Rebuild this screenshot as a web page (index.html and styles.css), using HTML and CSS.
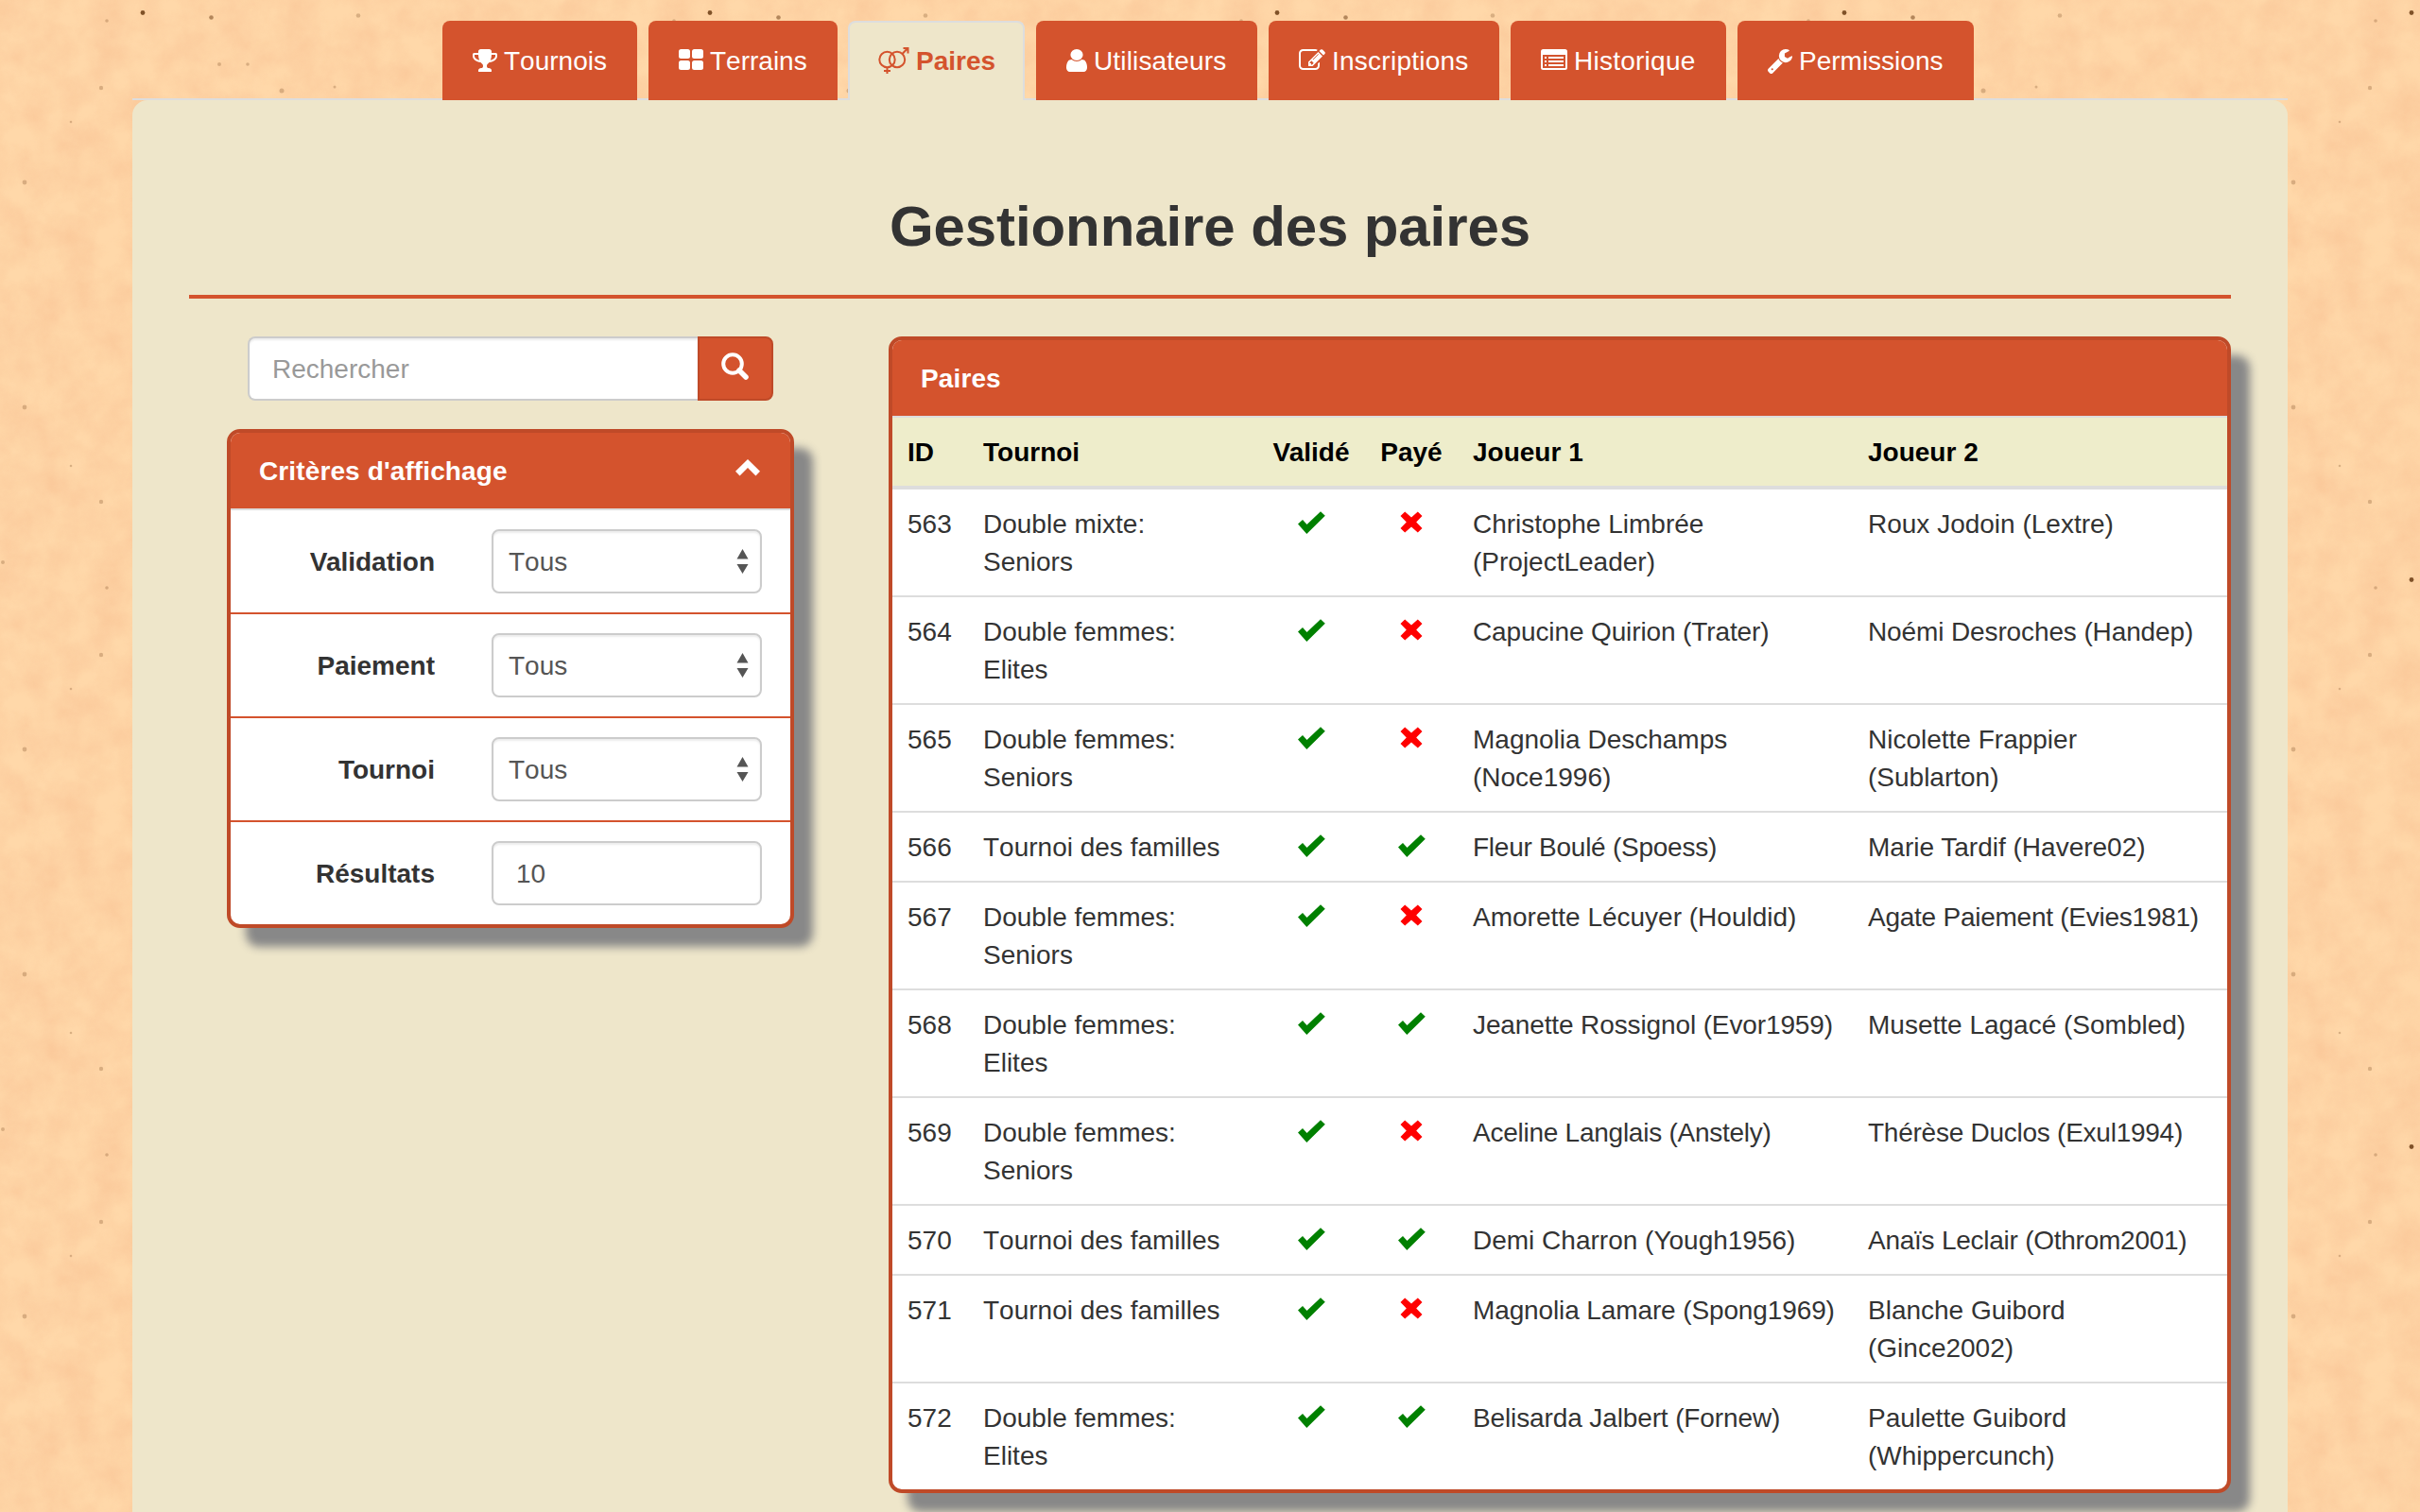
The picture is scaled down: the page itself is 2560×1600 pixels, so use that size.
FILE: index.html
```html
<!DOCTYPE html>
<html lang="fr">
<head>
<meta charset="utf-8">
<title>Gestionnaire des paires</title>
<link rel="stylesheet" href="styles.css">
</head>
<body>
<svg class="defs" width="0" height="0" aria-hidden="true">
  <symbol id="ok" viewBox="0 0 29 24"><path d="M0 13.500 5 9l4.500 5L24 .2 28.800 4.700 9.300 24z"/></symbol>
  <symbol id="no" viewBox="0 0 24 23"><path d="M5.200.4 12 6.600 18.800.4 23.500 5 17.200 11.500 23.500 18 18.800 22.600 12 16.400 5.200 22.600.5 18 6.800 11.500.5 5z" stroke-linejoin="round"/></symbol>
  <symbol id="sort" viewBox="0 0 13 26"><path d="M6.500 0 12.500 10.500H.5zM6.500 26 .5 16h12z"/></symbol>
</svg>

<nav class="tabs">
  <a class="tab t1" href="#"><svg class="ic" width="26" height="24" viewBox="64 128 1664 1536" preserveAspectRatio="none"><path d="M522 883q-74-162-74-371h-256v96q0 78 94.500 162t235.500 113zm1078-275v-96h-256q0 209-74 371 141-29 235.500-113t94.500-162zm128-128v128q0 71-41.500 143t-112 130-173 97.500-215.500 44.500q-42 54-95 95-38 34-52.500 72.500t-14.500 89.500q0 54 30.500 91t97.500 37q75 0 133.500 45.500t58.500 114.500v64q0 14-9 23t-23 9h-832q-14 0-23-9t-9-23v-64q0-69 58.500-114.500t133.500-45.500q67 0 97.500-37t30.500-91q0-51-14.500-89.500t-52.500-72.500q-53-41-95-95-113-5-215.500-44.500t-173-97.500-112-130-41.500-143v-128q0-40 28-68t68-28h288v-96q0-66 47-113t113-47h576q66 0 113 47t47 113v96h288q40 0 68 28t28 68z"/></svg><span>Tournois</span></a>
  <a class="tab t2" href="#"><svg class="ic" width="26" height="22" viewBox="0 0 26 22"><rect width="12" height="10" rx="2.500"/><rect x="14" width="12" height="10" rx="2.500"/><rect y="12" width="12" height="10" rx="2.500"/><rect x="14" y="12" width="12" height="10" rx="2.500"/></svg><span>Terrains</span></a>
  <a class="tab t3 active" href="#"><svg class="ic venus" width="33" height="28" viewBox="0 0 33 28"><g fill="none" stroke="currentColor" stroke-width="2"><circle cx="9.500" cy="13" r="8.200"/><circle cx="20" cy="13" r="8.200"/><path d="M9.500 21v7M6 25h7M25.500 7 31 1.300M26.500 1H31.500V6.500"/></g></svg><span>Paires</span></a>
  <a class="tab t4" href="#"><svg class="ic" width="22" height="24" viewBox="256 128 1280 1536" preserveAspectRatio="none"><path d="M1536 1399q0 109-62.500 187t-150.500 78h-854q-88 0-150.500-78t-62.500-187q0-85 8.500-160.500t31.500-152 58.500-131 94-89 134.500-34.500q131 128 313 128t313-128q76 0 134.500 34.500t94 89 58.500 131 31.500 152 8.500 160.500zm-256-887q0 159-112.500 271.500t-271.500 112.500-271.500-112.500-112.500-271.500 112.500-271.500 271.500-112.500 271.500 112.500 112.500 271.500z"/></svg><span>Utilisateurs</span></a>
  <a class="tab t5" href="#"><svg class="ic" width="28" height="22" viewBox="0 128 1792 1408" preserveAspectRatio="none"><path d="M888 1184l116-116-152-152-116 116v56h96v96h56zm440-720q-16-16-33 1l-350 350q-17 17-1 33t33-1l350-350q17-17 1-33zm80 594v190q0 119-84.500 203.500t-203.500 84.500h-832q-119 0-203.500-84.500t-84.500-203.500v-832q0-119 84.500-203.500t203.500-84.500h832q63 0 117 25 15 7 18 23 3 17-9 29l-49 49q-14 14-32 8-23-6-45-6h-832q-66 0-113 47t-47 113v832q0 66 47 113t113 47h832q66 0 113-47t47-113v-126q0-13 9-22l64-64q15-15 35-7t20 29zm-96-738l288 288-672 672h-288v-288zm444 132l-92 92-288-288 92-92q28-28 68-28t68 28l152 152q28 28 28 68t-28 68z"/></svg><span>Inscriptions</span></a>
  <a class="tab t6" href="#"><svg class="ic" width="28" height="22" viewBox="0 0 28 22"><path fill-rule="evenodd" d="M2.500 0h23A2.500 2.500 0 0 1 28 2.500v17a2.500 2.500 0 0 1-2.500 2.500h-23A2.500 2.500 0 0 1 0 19.500v-17A2.500 2.500 0 0 1 2.500 0zM2 6v13.500q0 .5.500.5h23q.5 0 .5-.5V6z"/><path d="M4 8h2v2H4zm4 0h16v2H8zM4 12h2v2H4zm4 0h16v2H8zM4 16h2v2H4zm4 0h16v2H8z"/></svg><span>Historique</span></a>
  <a class="tab t7" href="#"><svg class="ic wrench" width="26" height="26" viewBox="85 128 1641 1643" preserveAspectRatio="none"><path d="M448 1472q0-26-19-45t-45-19-45 19-19 45 19 45 45 19 45-19 19-45zm644-420l-682 682q-37 37-90 37-52 0-91-37l-106-108q-38-36-38-90 0-53 38-91l681-681q39 98 114.500 173.500t173.500 114.500zm634-435q0 39-23 106-47 134-164.500 217.500t-258.500 83.500q-185 0-316.500-131.500t-131.500-316.500 131.500-316.500 316.500-131.500q58 0 121.500 16.500t107.500 46.500q16 11 16 28t-16 28l-293 169v224l193 107q5-3 79-48.500t135.500-81 70.500-35.500q15 0 23.500 10t8.500 25z"/></svg><span>Permissions</span></a>
</nav>

<main class="content">
  <h1>Gestionnaire des paires</h1>
  <div class="columns">
    <aside class="side">
      <form class="search">
        <input class="control" type="text" placeholder="Rechercher">
        <button type="button" aria-label="Rechercher"><svg width="30" height="30" viewBox="0 0 30 30"><circle cx="12" cy="12" r="9.800" fill="none" stroke="#fff" stroke-width="4"/><path d="M19 19l7 7" stroke="#fff" stroke-width="5.500" stroke-linecap="round"/></svg></button>
      </form>
      <section class="panel">
        <header class="panel-head"><span>Critères d'affichage</span><svg class="chevron" width="26" height="18" viewBox="0 0 26 18"><path d="M13 0 26 12.800 21.500 17.500 13 9 4.500 17.500 0 12.800z"/></svg></header>
        <label class="row"><span>Validation</span><div class="select"><select class="control"><option>Tous</option></select><svg width="13" height="26"><use href="#sort"/></svg></div></label>
        <label class="row"><span>Paiement</span><div class="select"><select class="control"><option>Tous</option></select><svg width="13" height="26"><use href="#sort"/></svg></div></label>
        <label class="row"><span>Tournoi</span><div class="select"><select class="control"><option>Tous</option></select><svg width="13" height="26"><use href="#sort"/></svg></div></label>
        <label class="row"><span>Résultats</span><input class="control" type="text" value="10"></label>
      </section>
    </aside>
    <section class="panel list">
      <header class="panel-head"><span>Paires</span></header>
      <table>
        <colgroup><col class="c1"><col class="c2"><col class="c3"><col class="c4"><col class="c5"><col class="c6"></colgroup>
        <thead><tr><th>ID</th><th>Tournoi</th><th class="mark">Validé</th><th class="mark">Payé</th><th>Joueur 1</th><th>Joueur 2</th></tr></thead>
        <tbody>
          <tr><td>563</td><td>Double mixte:<br>Seniors</td><td class="mark"><svg class="ok"><use href="#ok"/></svg></td><td class="mark"><svg class="no"><use href="#no"/></svg></td><td>Christophe Limbrée<br>(ProjectLeader)</td><td>Roux Jodoin (Lextre)</td></tr>
          <tr><td>564</td><td>Double femmes:<br>Elites</td><td class="mark"><svg class="ok"><use href="#ok"/></svg></td><td class="mark"><svg class="no"><use href="#no"/></svg></td><td class="snug">Capucine Quirion (Trater)</td><td class="snug">Noémi Desroches (Handep)</td></tr>
          <tr><td>565</td><td>Double femmes:<br>Seniors</td><td class="mark"><svg class="ok"><use href="#ok"/></svg></td><td class="mark"><svg class="no"><use href="#no"/></svg></td><td>Magnolia Deschamps<br>(Noce1996)</td><td>Nicolette Frappier<br>(Sublarton)</td></tr>
          <tr><td>566</td><td class="loose">Tournoi des familles</td><td class="mark"><svg class="ok"><use href="#ok"/></svg></td><td class="mark"><svg class="ok"><use href="#ok"/></svg></td><td class="tight">Fleur Boulé (Spoess)</td><td>Marie Tardif (Havere02)</td></tr>
          <tr><td>567</td><td>Double femmes:<br>Seniors</td><td class="mark"><svg class="ok"><use href="#ok"/></svg></td><td class="mark"><svg class="no"><use href="#no"/></svg></td><td>Amorette Lécuyer (Houldid)</td><td class="tight">Agate Paiement (Evies1981)</td></tr>
          <tr><td>568</td><td>Double femmes:<br>Elites</td><td class="mark"><svg class="ok"><use href="#ok"/></svg></td><td class="mark"><svg class="ok"><use href="#ok"/></svg></td><td class="snug">Jeanette Rossignol (Evor1959)</td><td>Musette Lagacé (Sombled)</td></tr>
          <tr><td>569</td><td>Double femmes:<br>Seniors</td><td class="mark"><svg class="ok"><use href="#ok"/></svg></td><td class="mark"><svg class="no"><use href="#no"/></svg></td><td class="tight">Aceline Langlais (Anstely)</td><td class="tight">Thérèse Duclos (Exul1994)</td></tr>
          <tr><td>570</td><td class="loose">Tournoi des familles</td><td class="mark"><svg class="ok"><use href="#ok"/></svg></td><td class="mark"><svg class="ok"><use href="#ok"/></svg></td><td>Demi Charron (Yough1956)</td><td class="tight">Anaïs Leclair (Othrom2001)</td></tr>
          <tr><td>571</td><td class="loose">Tournoi des familles</td><td class="mark"><svg class="ok"><use href="#ok"/></svg></td><td class="mark"><svg class="no"><use href="#no"/></svg></td><td class="snug">Magnolia Lamare (Spong1969)</td><td>Blanche Guibord<br>(Gince2002)</td></tr>
          <tr><td>572</td><td>Double femmes:<br>Elites</td><td class="mark"><svg class="ok"><use href="#ok"/></svg></td><td class="mark"><svg class="ok"><use href="#ok"/></svg></td><td class="snug">Belisarda Jalbert (Fornew)</td><td>Paulette Guibord<br>(Whippercunch)</td></tr>
        </tbody>
      </table>
    </section>
  </div>
</main>
</body>
</html>
```

FILE: styles.css
```css
* { box-sizing: border-box; }

html { height: 100%; overflow: hidden; }

body {
  margin: 0;
  height: 1600px;
  overflow: hidden;
  display: flex;
  flex-direction: column;
  font: 28px/40px "Liberation Sans", Arial, sans-serif;
  color: #333;
  background-color: #ffd8a9;
  /* speckled paper, 600px tile */
  background-image: url("data:image/svg+xml,%3Csvg xmlns='http://www.w3.org/2000/svg' width='600' height='600'%3E%3Cfilter id='a' x='0' y='0' width='100%25' height='100%25' color-interpolation-filters='sRGB'%3E%3CfeTurbulence type='fractalNoise' baseFrequency='.03' numOctaves='5' seed='4' stitchTiles='stitch'/%3E%3CfeColorMatrix values='0 0 0 0 .96 0 0 0 0 .71 0 0 0 0 .53 .6 0 0 0 -.15'/%3E%3C/filter%3E%3Crect width='600' height='600' filter='url(%23a)'/%3E%3Cg fill='%23805228'%3E%3Ccircle cx='151' cy='13.500' r='2.400'/%3E%3Ccircle cx='223.500' cy='18.500' r='2.300' opacity='.6'/%3E%3Cg opacity='.3'%3E%3Ccircle cx='113' cy='22' r='1.800'/%3E%3Ccircle cx='379' cy='16.500' r='2.300'/%3E%3Ccircle cx='232' cy='68' r='2'/%3E%3Ccircle cx='262' cy='68' r='1.800'/%3E%3Ccircle cx='107' cy='93' r='2.200'/%3E%3Ccircle cx='107' cy='531' r='2.200'/%3E%3Ccircle cx='3' cy='595' r='2'/%3E%3Ccircle cx='298' cy='96' r='2.500'/%3E%3Ccircle cx='354' cy='92' r='1.500'/%3E%3Ccircle cx='26' cy='193' r='2.400'/%3E%3Ccircle cx='26' cy='431' r='2.400'/%3E%3Ccircle cx='75' cy='129' r='1.300'/%3E%3Ccircle cx='75' cy='493' r='1.300'/%3E%3C/g%3E%3C/g%3E%3C/svg%3E");
}

.defs { display: none; }

.tabs {
  flex: none;
  width: 2280px;
  height: 106px;
  margin: 0 auto;
  padding: 22px 0 0 328px;
  display: flex;
  gap: 12px;
  background: linear-gradient(#ddd, #ddd) 0 100% / 100% 2px no-repeat;
}

.tab {
  height: 84px;
  display: flex;
  align-items: flex-start;
  padding: 23px 0 0 32px;
  border-radius: 8px 8px 0 0;
  background: #d4532d;
  color: #fff;
  fill: currentColor;
  text-decoration: none;
  white-space: nowrap;
}

.tab .ic { flex: none; margin: 7px 7px 0 0; }
.tab .venus { margin: 5px 7px 0 0; }
.t1 { width: 206px; font-kerning: none; }
.t2 { width: 200px; font-kerning: none; }
.t3 { width: 188px; }
.t4 { width: 234px; letter-spacing: .15px; }
.t5 { width: 244px; letter-spacing: .25px; }
.t6 { width: 228px; letter-spacing: .25px; }
.t7 { width: 250px; }

.tab.active {
  margin: 0 0 0 -1px;
  width: 187px;
  background: #eee6ca;
  border: 2px solid #ddd;
  border-bottom: 0;
  padding: 21px 0 0 30px;
  color: #d4532d;
  font-weight: bold;
}

.content {
  flex: 1;
  width: 2280px;
  margin: 0 auto;
  padding: 0 60px;
  border-radius: 16px 16px 0 0;
  background: #eee6ca;
}

h1 {
  margin: 0 0 40px;
  padding: 100px 0 38px;
  border-bottom: 4px solid #d4532d;
  font-size: 60px;
  line-height: 68px;
  letter-spacing: -.1px;
  text-align: center;
}

.columns { display: flex; align-items: flex-start; justify-content: space-between; }

.side { width: 600px; margin-left: 40px; }

.search { display: flex; margin: 0 22px 30px; }

.control {
  display: block;
  width: 100%;
  height: 68px;
  margin: 0;
  padding: 2px 24px 0;
  border: 2px solid #ccc;
  border-radius: 8px;
  background: #fff;
  box-shadow: inset 0 2px 2px rgba(0, 0, 0, .075);
  font: inherit;
  color: #555;
  appearance: none;
  outline: 0;
}

.control::placeholder { color: #999; opacity: 1; }

.search .control { flex: 1; min-width: 0; border-right: 0; border-radius: 8px 0 0 8px; }

.search button {
  width: 80px;
  height: 68px;
  padding: 15px 0 0 23px;
  border: 2px solid #bf4a28;
  border-radius: 0 8px 8px 0;
  background: #d4532d;
  display: flex;
}

.panel {
  border: 4px solid #bf4a28;
  border-radius: 14px;
  background: #fff;
  box-shadow: 20px 20px 10px #888;
}

.panel-head {
  display: flex;
  justify-content: space-between;
  height: 82px;
  padding: 21px 32px 0 30px;
  border-bottom: 2px solid #ddd;
  border-radius: 10px 10px 0 0;
  background: #d4532d;
  color: #fff;
  fill: #fff;
  font-weight: bold;
  letter-spacing: .12px;
}

.chevron { margin-top: 7px; }

.row {
  display: grid;
  grid-template-columns: 216px 286px;
  column-gap: 60px;
  align-items: center;
  height: 110px;
  border-bottom: 2px solid #d4532d;
}

.row:last-child { height: 108px; border-bottom: 0; }
.row > span { padding-top: 2px; font-weight: bold; text-align: right; }

.select { position: relative; }
.select .control { padding: 2px 16px 0; font-kerning: none; }
.select svg { position: absolute; right: 14px; top: 21px; fill: #555; }

.list { width: 1420px; }

table { width: 1412px; table-layout: fixed; border-collapse: separate; border-spacing: 0; }
.c1 { width: 80px; }
.c2 { width: 306px; }
.c3 { width: 114px; }
.c4 { width: 98px; }
.c5 { width: 418px; }
.c6 { width: 396px; }

th, td { padding: 17px 0 15px 16px; text-align: left; vertical-align: top; white-space: nowrap; }
th { height: 76px; background: #eeedcb; color: #000; border-bottom: 4px solid #ddd; }
td { border-bottom: 2px solid #ddd; }
tr:last-child td { border-bottom: 0; }
.loose { font-kerning: none; }
.snug { letter-spacing: -.12px; }
.tight { letter-spacing: -.25px; }
.mark { padding-left: 0; padding-right: 0; text-align: center; }
.mark svg { display: block; margin: 6px auto 0; }
.ok { width: 29px; height: 24px; fill: #008000; }
.no { width: 24px; height: 23px; fill: #f00; }
```
